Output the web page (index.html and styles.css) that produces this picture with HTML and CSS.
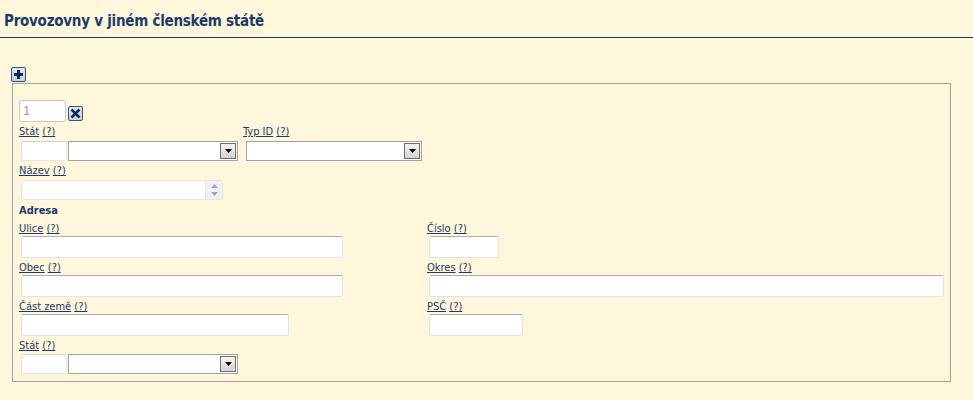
FILE: index.html
```html
<!DOCTYPE html>
<html lang="cs">
<head>
<meta charset="utf-8">
<title>Provozovny v jiném členském státě</title>
<link rel="stylesheet" href="styles.css">
</head>
<body>
<h1 class="page-title">Provozovny v jiném členském státě</h1>
<div class="toolbar">
  <span class="icon-btn plus" title="Přidat">
    <svg width="11" height="11" viewBox="0 0 11 11"><path d="M4 1h3v3h3v3H7v3H4V7H1V4h3z" fill="#0f2a55"/></svg>
  </span>
</div>
<div class="fs">
  <div class="row-id">
    <div class="inp inp-id">1</div>
    <span class="icon-btn xbtn" title="Odebrat">
      <svg width="11" height="11" viewBox="0 0 11 11"><path d="M1.5 1.5l8 8M9.5 1.5l-8 8" stroke="#0f2a55" stroke-width="2.6"/></svg>
    </span>
  </div>
  <div class="row-top">
    <div class="field f-stat">
      <div class="lbl"><a href="#">Stát</a> <a href="#">(?)</a></div>
      <div class="ctrl combo">
        <div class="inp code"></div>
        <div class="sel sel-stat"><span class="arrow"><svg width="7" height="4" viewBox="0 0 7 4"><path d="M0 0h7L3.5 4z" fill="#000"/></svg></span></div>
      </div>
    </div>
    <div class="field f-typ">
      <div class="lbl"><a href="#">Typ ID</a> <a href="#">(?)</a></div>
      <div class="ctrl">
        <div class="sel sel-typ"><span class="arrow"><svg width="7" height="4" viewBox="0 0 7 4"><path d="M0 0h7L3.5 4z" fill="#000"/></svg></span></div>
      </div>
    </div>
  </div>
  <div class="field f-nazev">
    <div class="lbl"><a href="#">Název</a> <a href="#">(?)</a></div>
    <div class="ctrl">
      <div class="inp area">
        <span class="spin">
          <svg width="7" height="4" viewBox="0 0 7 4"><path d="M0 4h7L3.5 0z" fill="#a9a9a9"/></svg>
          <svg width="7" height="4" viewBox="0 0 7 4"><path d="M0 0h7L3.5 4z" fill="#a9a9a9"/></svg>
        </span>
      </div>
    </div>
  </div>
  <div class="section">Adresa</div>
  <div class="addr">
    <div class="field">
      <div class="lbl"><a href="#">Ulice</a> <a href="#">(?)</a></div>
      <div class="ctrl"><div class="inp tall w-ulice"></div></div>
    </div>
    <div class="field">
      <div class="lbl"><a href="#">Číslo</a> <a href="#">(?)</a></div>
      <div class="ctrl"><div class="inp tall w-cislo"></div></div>
    </div>
    <div class="field">
      <div class="lbl"><a href="#">Obec</a> <a href="#">(?)</a></div>
      <div class="ctrl"><div class="inp tall w-ulice"></div></div>
    </div>
    <div class="field">
      <div class="lbl"><a href="#">Okres</a> <a href="#">(?)</a></div>
      <div class="ctrl"><div class="inp tall w-okres"></div></div>
    </div>
    <div class="field">
      <div class="lbl"><a href="#">Část země</a> <a href="#">(?)</a></div>
      <div class="ctrl"><div class="inp tall w-cast"></div></div>
    </div>
    <div class="field">
      <div class="lbl"><a href="#">PSČ</a> <a href="#">(?)</a></div>
      <div class="ctrl"><div class="inp tall w-psc"></div></div>
    </div>
    <div class="field">
      <div class="lbl"><a href="#">Stát</a> <a href="#">(?)</a></div>
      <div class="ctrl combo">
        <div class="inp code"></div>
        <div class="sel sel-stat"><span class="arrow"><svg width="7" height="4" viewBox="0 0 7 4"><path d="M0 0h7L3.5 4z" fill="#000"/></svg></span></div>
      </div>
    </div>
  </div>
</div>
</body>
</html>
```
FILE: styles.css
```css
html, body {
  margin: 0;
  padding: 0;
  background: #fff7dc;
}
body {
  font-family: "DejaVu Sans Condensed", "Liberation Sans", sans-serif;
  font-size: 11px;
  color: #1b3a6b;
  height: 400px;
}
.page-title {
  margin: 0;
  padding: 12px 0 7px 4px;
  font-size: 15px;
  line-height: 18px;
  font-weight: bold;
  letter-spacing: -0.25px;
  color: #1b3a6b;
  border-bottom: 1px solid #1b3a6b;
}
.toolbar {
  padding: 29px 0 0 11px;
  height: 16px;
  display: flex;
}
.icon-btn {
  display: inline-flex;
  align-items: center;
  justify-content: center;
  width: 13px;
  height: 13px;
  border: 1px solid #3d4f6b;
  border-radius: 2px;
  background: linear-gradient(#e2eaf6, #c3d3ea);
}
.fs {
  margin: 0 22px 0 12px;
  padding: 16px 6px 7px 6px;
  border: 1px solid #a6a39a;
  box-shadow: -1px -1px 0 #f6f1e6, inset -1px -1px 0 #f6f1e6;
  height: 274px;
}
.row-id {
  display: flex;
  align-items: flex-end;
}
.inp {
  box-sizing: border-box;
  background: #fff;
  border: 1px solid #dfe3e8;
  border-top-color: #abadb3;
  border-left-color: #e2e3ea;
  border-radius: 2px;
}
.inp-id {
  width: 47px;
  height: 22px;
  border: 1px solid #c9c9c9;
  border-radius: 3px;
  color: #a0a0a0;
  font-family: "Liberation Sans", sans-serif;
  font-size: 13px;
  line-height: 20px;
  padding-left: 3px;
}
.xbtn {
  margin: 0 0 1px 2px;
}
.row-top {
  display: flex;
  margin-top: 3px;
}
.field {
  display: flex;
  flex-direction: column;
}
.lbl {
  height: 14px;
  line-height: 14px;
  white-space: nowrap;
}
.lbl a {
  color: #1b3a6b;
  text-decoration: underline;
}
.ctrl {
  margin-left: 2px;
  display: flex;
}
.f-stat .ctrl, .f-typ .ctrl {
  margin-top: 2px;
}
.f-typ {
  margin-left: 5px;
}
.f-typ .ctrl {
  margin-left: 3px;
}
.combo {
  gap: 1px;
}
.code {
  width: 46px;
  height: 20px;
  border: 1px solid #e4e4e4;
  border-top-color: #d0d0d0;
}
.sel {
  box-sizing: border-box;
  height: 20px;
  background: #fff;
  border: 1px solid #a2a2a2;
  display: flex;
  justify-content: flex-end;
  align-items: stretch;
  padding: 1px;
}
.sel-stat { width: 170px; }
.sel-typ { width: 176px; }
.arrow {
  width: 14px;
  border: 1px solid #6f6f6f;
  background: linear-gradient(#f5f5f5, #d2d2d2);
  display: flex;
  align-items: center;
  justify-content: center;
}
.f-nazev {
  margin-top: 3px;
}
.f-nazev .ctrl {
  margin-top: 2px;
}
.area {
  width: 202px;
  height: 20px;
  border: 1px solid #e6e6e6;
  display: flex;
  justify-content: flex-end;
}
.spin {
  width: 16px;
  background: #f0f0f0;
  border-left: 1px solid #e9e9e9;
  display: flex;
  flex-direction: column;
  align-items: center;
  justify-content: center;
  gap: 4px;
}
.section {
  margin-top: 4px;
  height: 14px;
  line-height: 14px;
  font-weight: bold;
}
.addr {
  margin-top: 4px;
  display: grid;
  grid-template-columns: 408px 1fr;
  row-gap: 3px;
}
.tall { height: 22px; }
.w-ulice { width: 322px; }
.w-cislo { width: 70px; }
.w-okres { width: 515px; }
.w-cast { width: 268px; }
.w-psc { width: 94px; }
.addr .combo {
  margin-top: 1px;
}
```
